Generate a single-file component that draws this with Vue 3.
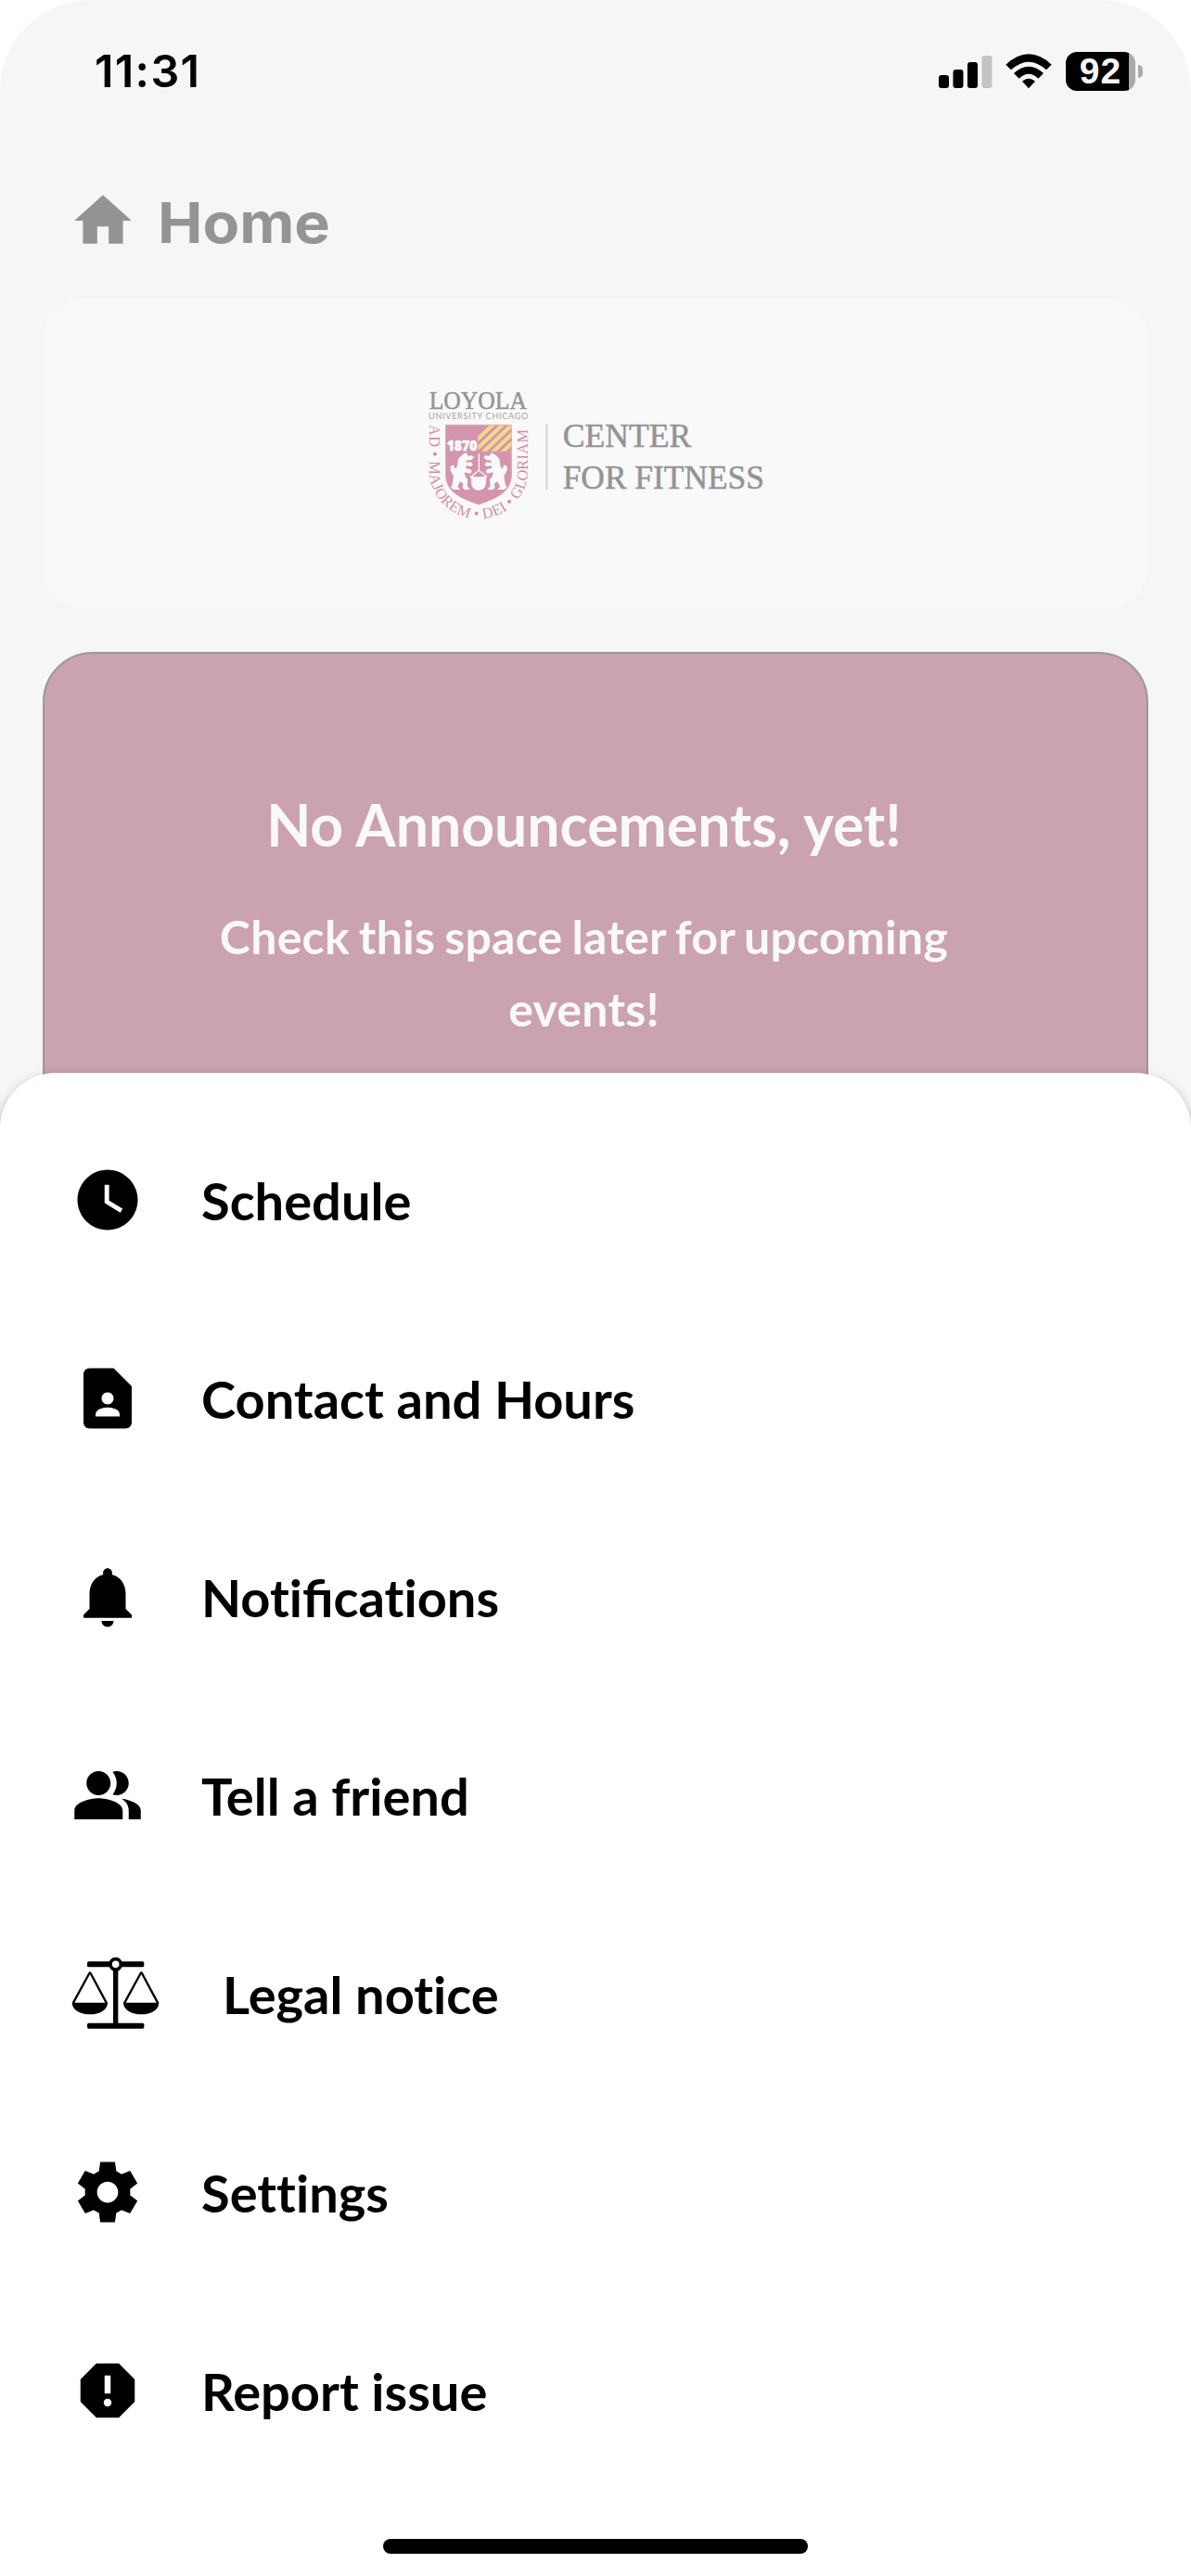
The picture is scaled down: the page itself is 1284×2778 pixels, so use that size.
<template>
  <div class="screen">
    <div class="status-bar">
      <span class="time">11:31</span>
      <div class="status-icons">
        <svg class="signal" viewBox="0 0 58 36">
          <rect x="0" y="22" width="11" height="14" rx="3" />
          <rect x="15.5" y="16" width="11" height="20" rx="3" />
          <rect x="31" y="8" width="11" height="28" rx="3" />
          <rect x="46.5" y="1" width="11" height="35" rx="3" fill="#c4c4c4" />
        </svg>
        <svg class="wifi" viewBox="0 0 150 112">
          <path d="M1 34 Q75 -34 149 34 L132 51 Q75 -1 18 51 Z" />
          <path d="M27 62 Q75 18 123 62 L106 79 Q75 50 44 79 Z" />
          <path d="M54 88 Q75 70 96 88 L75 111 Z" />
        </svg>
        <div class="battery">
          <div class="battery-body"><span>92</span></div>
          <div class="battery-tip"></div>
        </div>
      </div>
    </div>

    <header class="page-header">
      <svg class="home-icon" viewBox="0 0 24 24">
        <path d="M10 20v-6h4v6h5v-8h3L12 3 2 12h3v8z" />
      </svg>
      <h1>Home</h1>
    </header>

    <main class="content">
      <section class="logo-card">
        <svg class="logo" viewBox="0 0 1200 540">
          <defs>
            <path id="motto" d="M68 174 V318 C68 410 142 478 228 478 C314 478 388 410 388 318 V170" />
            <clipPath id="stripes"><rect x="226" y="176" width="108" height="84" /></clipPath>
            <g id="wolf">
              <path d="M187 264 L174 272 L162 284 L159 306 L154 318 L146 304 L137 309 L137 322 L147 340 L143 366 L138 378 L148 384 L168 384 L160 374 L168 358 L178 364 L176 378 L184 385 L200 383 L191 372 L193 352 L184 340 L182 328 L200 332 L206 326 L202 318 L186 315 L188 307 L204 309 L210 302 L203 295 L190 297 L187 290 L204 288 L213 280 L206 273 L196 276 Z" />
            </g>
          </defs>
          <text class="serif" x="68" y="122" font-size="84" textLength="316" lengthAdjust="spacingAndGlyphs">LOYOLA</text>
          <text class="sans" x="66" y="157" font-size="27" textLength="322">UNIVERSITY CHICAGO</text>

          <!-- crest -->
          <path d="M122 175 H334 V335 C334 392 286 412 228 432 C170 412 122 392 122 335 Z" fill="#d494ae" stroke="#d9a9a6" stroke-width="3" />
          <g clip-path="url(#stripes)" stroke="#f2d98c" stroke-width="13">
            <path v-for="n in 7" :key="n" :d="`M${142 + n * 31} 270 l110 -104`" />
          </g>
          <text class="year" x="125" y="258" font-size="46" textLength="98" lengthAdjust="spacingAndGlyphs">1870</text>
          <g fill="#f9f9f9">
            <use href="#wolf" />
            <use href="#wolf" transform="translate(457 0) scale(-1 1)" />
            <path d="M200 338 Q228 348 256 338 L252 350 Q255 386 228 386 Q201 386 204 350 Z" />
          </g>
          <path d="M229 268 V322 M206 340 L229 322 L252 340" fill="none" stroke="#f9f9f9" stroke-width="4" />
          <text class="motto" font-size="49">
            <textPath href="#motto" textLength="776">AD • MAJOREM • DEI • GLORIAM</textPath>
          </text>

          <rect x="444" y="171" width="8" height="213" fill="#dedede" />
          <text class="serif" x="500" y="247" font-size="108" textLength="416" lengthAdjust="spacingAndGlyphs">CENTER</text>
          <text class="serif" x="500" y="380" font-size="108" textLength="652" lengthAdjust="spacingAndGlyphs">FOR FITNESS</text>
        </svg>
      </section>

      <section class="announcement">
        <h2>No Announcements, yet!</h2>
        <p>Check this space later for upcoming events!</p>
      </section>
    </main>

    <nav class="sheet">
      <ul>
        <li v-for="item in menu" :key="item.label">
          <svg v-if="item.path" class="menu-icon" viewBox="0 0 24 24">
            <path :d="item.path" fill-rule="evenodd" />
          </svg>
          <svg v-else class="scales-icon" viewBox="51 688 303 246">
            <rect x="102" y="707" width="184" height="18" rx="5" />
            <rect x="102" y="906" width="184" height="18" rx="5" />
            <rect x="186" y="730" width="16" height="182" />
            <circle cx="194" cy="716" r="17" fill="#fff" stroke="#000" stroke-width="11" />
            <g v-for="x in [0, 166]" :key="x" :transform="`translate(${x} 0)`">
              <path d="M56 842 L109 745 Q111 742 113 745 L165 842" fill="none" stroke="#000" stroke-width="7" />
              <path d="M53 840 H168 C168 864 142 878 111 878 C80 878 53 864 53 840 Z" />
            </g>
          </svg>
          <span class="label"><span v-for="(part, i) in splitLabel(item.label)" :key="i" :class="{ ligature: part === 'fi' }">{{ part }}</span></span>
        </li>
      </ul>
      <div class="home-indicator"></div>
    </nav>
  </div>
</template>

<script setup>
import { ref } from 'vue'

const menu = ref([
  {
    label: 'Schedule',
    path: 'M12 2C6.5 2 2 6.5 2 12s4.5 10 10 10 10-4.5 10-10S17.5 2 12 2zm4.2 14.2L11 13V7h1.5v5.2l4.5 2.7-.8 1.3z',
  },
  {
    label: 'Contact and Hours',
    path: 'M14 2H6c-1.1 0-2 .9-2 2v16c0 1.1.9 2 2 2h12c1.1 0 2-.9 2-2V8l-6-6zm-2 8c1.1 0 2 .9 2 2s-.9 2-2 2-2-.9-2-2 .9-2 2-2zm4 8H8v-.57c0-.81.48-1.53 1.22-1.85a6.95 6.95 0 0 1 5.56 0A2.01 2.01 0 0 1 16 17.43V18z',
  },
  {
    label: 'Notifications',
    path: 'M12 22c1.1 0 2-.9 2-2h-4c0 1.1.9 2 2 2zm6-6v-5c0-3.07-1.63-5.64-4.5-6.32V4c0-.83-.67-1.5-1.5-1.5s-1.5.67-1.5 1.5v.68C7.64 5.36 6 7.92 6 11v5l-2 2v1h16v-1l-2-2z',
  },
  {
    label: 'Tell a friend',
    path: 'M16.67 13.13C18.04 14.06 19 15.32 19 17v3h4v-3c0-2.18-3.57-3.47-6.33-3.87zM15 12c2.21 0 4-1.79 4-4s-1.79-4-4-4c-.47 0-.91.1-1.33.24C14.5 5.27 15 6.58 15 8s-.5 2.73-1.33 3.76c.42.14.86.24 1.33.24zM9 12c2.21 0 4-1.79 4-4s-1.79-4-4-4-4 1.79-4 4 1.79 4 4 4zm0 1c-2.67 0-8 1.34-8 4v3h16v-3c0-2.66-5.33-4-8-4z',
  },
  { label: 'Legal notice' },
  {
    label: 'Settings',
    path: 'M19.44 12.99l-.01.02c.04-.33.08-.67.08-1.01 0-.34-.03-.66-.07-.99l.01.02 2.44-1.92-2.43-4.22-2.87 1.16.01.01c-.52-.4-1.09-.74-1.71-1h.01L14.44 2H9.57l-.44 3.07h.01c-.62.26-1.19.6-1.71 1l.01-.01-2.88-1.17-2.44 4.22 2.44 1.92.01-.02c-.04.33-.07.65-.07.99 0 .34.03.68.08 1.01l-.01-.02-2.1 1.65-.33.26 2.43 4.2 2.88-1.15-.02-.04c.53.41 1.1.75 1.73 1.01h-.03L9.58 22h4.85s.03-.18.06-.42l.38-2.65h-.01c.62-.26 1.2-.6 1.73-1.01l-.02.04 2.88 1.15 2.43-4.2s-.14-.12-.33-.26l-2.11-1.66zM12 15.5c-1.93 0-3.5-1.57-3.5-3.5s1.57-3.5 3.5-3.5 3.5 1.57 3.5 3.5-1.57 3.5-3.5 3.5z',
  },
  {
    label: 'Report issue',
    path: 'M15.73 3H8.27L3 8.27v7.46L8.27 21h7.46L21 15.73V8.27L15.73 3zM12 17.3c-.72 0-1.3-.58-1.3-1.3s.58-1.3 1.3-1.3 1.3.58 1.3 1.3-.58 1.3-1.3 1.3zm1-4.3h-2V7h2v6z',
  },
])

// only "fi" is joined, Lato's "ti" and "tti" ligatures stay off
const splitLabel = (label) => label.split(/(fi)/)
</script>

<style>
body {
  background: #fff;
}
</style>

<style scoped>
.screen {
  display: flex;
  flex-direction: column;
  width: 1284px;
  height: 2778px;
  overflow: hidden;
  background: #f6f6f6;
  border-radius: 98px 98px 0 0;
  font-family: Lato, 'Liberation Sans', sans-serif;
}

.status-bar {
  display: flex;
  justify-content: space-between;
  align-items: center;
  height: 153px;
  padding: 0 52px 0 102px;
  box-sizing: border-box;
  flex-shrink: 0;
}

.time {
  font-family: Inter, sans-serif;
  font-size: 48.5px;
  font-weight: 600;
  letter-spacing: 1.3px;
}

.status-icons {
  display: flex;
  align-items: center;
}

.signal {
  width: 58px;
  height: 36px;
}

.wifi {
  width: 50px;
  height: 38px;
  margin: 0 15px 0 14px;
}

.battery {
  display: flex;
  align-items: center;
  gap: 3px;
}

.battery-body {
  display: flex;
  align-items: center;
  justify-content: center;
  box-sizing: border-box;
  width: 75px;
  height: 42px;
  border-radius: 12px;
  background: linear-gradient(to right, #000 68px, #a9a9a9 68px);
  color: #f6f6f6;
  font-family: 'Liberation Sans', sans-serif;
  font-size: 39px;
  font-weight: 700;
  letter-spacing: 1px;
}

.battery-tip {
  width: 5px;
  height: 14px;
  border-radius: 0 5px 5px 0;
  background: #a9a9a9;
}

.page-header {
  display: flex;
  align-items: center;
  gap: 22px;
  height: 169px;
  padding: 1px 0 0 74px;
  box-sizing: border-box;
  flex-shrink: 0;
  color: #949494;
}

.home-icon {
  width: 74px;
  height: 74px;
  fill: #949494;
}

.page-header h1 {
  margin: 3px 0 0;
  font-family: Inter, sans-serif;
  font-size: 60px;
  font-weight: 700;
  transform: scaleX(1.08);
  transform-origin: left;
}

.content {
  display: flex;
  flex-direction: column;
  gap: 47px;
  height: 835px;
  padding: 0 46px;
  flex-shrink: 0;
}

.logo-card {
  display: flex;
  align-items: center;
  justify-content: center;
  height: 334px;
  border-radius: 45px;
  background: #f9f9f9;
  flex-shrink: 0;
}

.logo {
  width: 400px;
  height: 180px;
  margin: 2px 4px 0 0;
}

.serif {
  font-family: 'Liberation Serif', serif;
  fill: #949494;
  stroke: #949494;
  stroke-width: 1.5;
}

.sans {
  font-family: Lato, sans-serif;
  fill: #a2a2a2;
}

.year {
  font-family: 'Open Sans', sans-serif;
  font-weight: 800;
  fill: #f9f9f9;
  stroke: #f9f9f9;
  stroke-width: 2;
}

.motto {
  font-family: 'Liberation Serif', serif;
  fill: #d28fa5;
}

.announcement {
  box-sizing: border-box;
  height: 600px;
  padding: 146px 99px 0 74px;
  border: 2px solid #999;
  border-radius: 54px;
  background: #cba2af;
  color: #f9f9f9;
  text-align: center;
  flex-shrink: 0;
}

.announcement h2 {
  margin: 0;
  font-size: 62.5px;
  font-weight: 700;
  line-height: 76px;
}

.announcement p {
  margin: 45px 80px 0;
  font-size: 50px;
  font-weight: 700;
  line-height: 77.5px;
  letter-spacing: 0.25px;
  word-spacing: -2.5px;
}

.sheet {
  position: relative;
  display: flex;
  flex-direction: column;
  align-items: center;
  justify-content: space-between;
  box-sizing: border-box;
  flex: 1;
  padding: 30px 0 24px;
  border-radius: 60px 60px 0 0;
  background: #fff;
  box-shadow: 0 4px 12px rgba(0, 0, 0, 0.28);
}

.sheet ul {
  width: 100%;
  margin: 0;
  padding: 0;
  list-style: none;
}

.sheet li {
  display: flex;
  align-items: center;
  gap: 62px;
  height: 214px;
  padding-left: 77px;
  font-size: 56px;
  font-weight: 700;
}

.label {
  font-variant-ligatures: none;
  white-space: pre;
}

.label .ligature {
  font-variant-ligatures: common-ligatures;
}

.menu-icon {
  width: 78px;
  height: 78px;
}

.scales-icon {
  width: 101px;
  height: 82px;
}

.home-indicator {
  width: 458px;
  height: 16px;
  border-radius: 8px;
  background: #000;
}
</style>
